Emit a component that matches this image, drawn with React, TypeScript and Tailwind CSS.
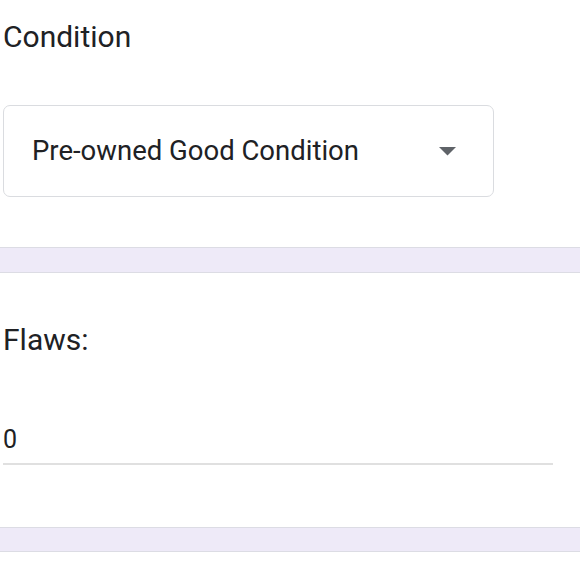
export default function App() {
  return (
    <div className="w-[580px] h-[580px] bg-white overflow-hidden text-[#202124]" style={{ fontFamily: "Roboto, 'Liberation Sans', sans-serif" }}>
      <div className="pl-[3px] pt-[17px] h-[247px] flex flex-col">
        <div className="text-[30px] leading-[40px]">Condition</div>
        <div className="mt-[48px] w-[491px] h-[92px] border border-[#dadce0] rounded-[7px] flex items-center pl-[28px] pr-[37px]">
          <span className="text-[27.5px] leading-[32px] flex-1">Pre-owned Good Condition</span>
          <svg width="17" height="9" viewBox="0 0 17 9" className="mt-[1px]">
            <path d="M0 0 L17 0 L8.5 8.5 Z" fill="#5f6368" />
          </svg>
        </div>
      </div>
      <div className="h-[26px] bg-[#eeeaf8] border-y border-[#dcdce4]" />
      <div className="pl-[3px] h-[254px] flex flex-col">
        <div className="text-[30px] leading-[40px] mt-[47px]">Flaws:</div>
        <div className="mt-[64px] w-[550px] border-b-2 border-[#e0e0e0] text-[25px] leading-[32px] pb-[7px]">0</div>
      </div>
      <div className="h-[25px] bg-[#eeeaf8] border-y border-[#dcdce4]" />
    </div>
  );
}
